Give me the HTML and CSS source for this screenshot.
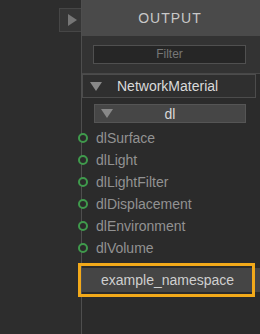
FILE: index.html
```html
<!DOCTYPE html>
<html lang="en">
<head>
  <meta charset="UTF-8">
  <title>Output</title>
  <link rel="stylesheet" href="styles.css">
</head>
<body>
  <div class="gutter">
    <button class="toggle"><span class="tri-right"></span></button>
  </div>

  <div class="panel">
    <div class="header">OUTPUT</div>

    <div class="filter-bar">
      <div class="filter">Filter</div>
    </div>

    <div class="group">
      <span class="tri-down"></span>
      <span class="group-name">NetworkMaterial</span>
    </div>

    <div class="sub">
      <span class="tri-down"></span>
      <span class="sub-name">dl</span>
    </div>

    <ul class="items">
      <li><span class="dot"></span>dlSurface</li>
      <li><span class="dot"></span>dlLight</li>
      <li><span class="dot"></span>dlLightFilter</li>
      <li><span class="dot"></span>dlDisplacement</li>
      <li><span class="dot"></span>dlEnvironment</li>
      <li><span class="dot"></span>dlVolume</li>
    </ul>

    <div class="ns">
      <div class="ns-row">example_namespace</div>
      <!-- highlight frame -->
      <div class="ns-mark"></div>
    </div>
  </div>
</body>
</html>
```

FILE: styles.css
```css
body {
  margin: 0;
  width: 260px;
  height: 334px;
  overflow: hidden;
  background: #2d2d2d;
  font-family: "Liberation Sans", Arial, sans-serif;
  display: flex;
}
.gutter {
  width: 81px;
  flex: none;
}
.toggle {
  display: flex;
  align-items: center;
  justify-content: center;
  margin: 8px 0 0 59px;
  width: 23px;
  height: 24px;
  padding: 0;
  background: #363636;
  border: 1px solid #464646;
  border-right: none;
}
.tri-right {
  width: 0;
  height: 0;
  border-top: 6px solid transparent;
  border-bottom: 6px solid transparent;
  border-left: 9px solid #767676;
  margin-left: 2px;
}
.panel {
  flex: none;
  width: 180px;
  border-left: 1px solid #4e4e4e;
  background: #2b2b2b;
}
.header {
  height: 36px;
  line-height: 36px;
  background: #4a4a4a;
  color: #c8c8c8;
  font-size: 14px;
  letter-spacing: 1px;
  text-align: center;
  padding-right: 4px;
}
.filter-bar {
  height: 38px;
  background: #333;
  border-bottom: 1px solid #484848;
  padding: 9px 0 0 11px;
  box-sizing: border-box;
}
.filter {
  width: 153px;
  height: 19px;
  box-sizing: border-box;
  background: #262626;
  border: 1px solid #505050;
  color: #777;
  font-size: 12px;
  line-height: 17px;
  text-align: center;
}
.group {
  display: flex;
  align-items: center;
  height: 24px;
  width: 174px;
  box-sizing: border-box;
  border: 1px solid #4c4c4c;
  background: #2f2f2f;
  padding-left: 7px;
}
.tri-down {
  width: 0;
  height: 0;
  border-left: 6px solid transparent;
  border-right: 6px solid transparent;
  border-top: 9px solid #888;
}
.group-name {
  margin-left: 15px;
  color: #dadada;
  font-size: 14px;
}
.sub {
  display: flex;
  align-items: center;
  margin: 6px 0 0 12px;
  width: 152px;
  height: 19px;
  box-sizing: border-box;
  background: #464646;
  border: 1px solid #555;
  padding-left: 6px;
}
.sub-name {
  flex: 1;
  text-align: center;
  color: #d8d8d8;
  font-size: 14px;
  padding-right: 18px;
}
.items {
  list-style: none;
  margin: 4px 0 0;
  padding: 0;
}
.items li {
  display: flex;
  align-items: center;
  height: 22px;
  color: #929292;
  font-size: 14px;
}
.dot {
  flex: none;
  width: 6px;
  height: 6px;
  border: 2px solid #3f9a4c;
  border-radius: 50%;
  margin: 0 8px 0 -4px;
  background: #2b2b2b;
}
.ns {
  position: relative;
  margin-top: 9px;
}
.ns-row {
  height: 24px;
  line-height: 24px;
  background: #454545;
  color: #cfcfcf;
  font-size: 14px;
  padding-left: 19px;
}
.ns-mark {
  position: absolute;
  left: -4px;
  top: -5px;
  width: 171px;
  height: 28px;
  border: 3px solid #f2a91a;
}
```
